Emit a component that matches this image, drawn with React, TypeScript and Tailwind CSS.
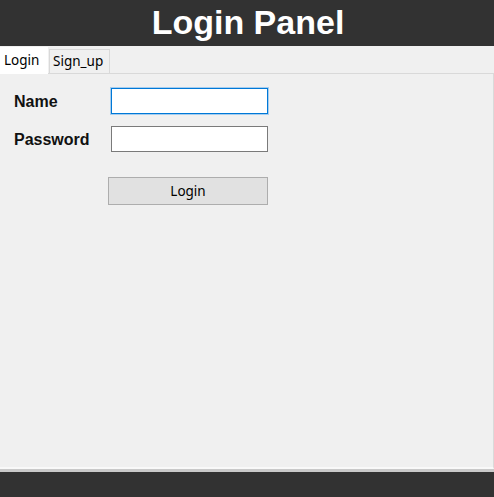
import { useState } from 'react';

export default function App() {
  const [tab, setTab] = useState<'login' | 'signup'>('login');
  const [name, setName] = useState('');
  const [password, setPassword] = useState('');

  return (
    <div className="w-full h-[497px] flex flex-col bg-[#f0f0f0]">
      <div className="h-[46px] bg-[#323232] flex items-center justify-center">
        <h1 className="text-white font-bold text-[34px] leading-none font-['Liberation_Sans',Arial,sans-serif] -mt-[3px] ml-[2px]">
          Login Panel
        </h1>
      </div>

      <div className="h-[28px] flex items-end border-b border-[#d9d9d9] font-['Noto_Sans',sans-serif] text-[13.5px] text-black">
        <button
          onClick={() => setTab('login')}
          className={
            tab === 'login'
              ? 'h-[27px] w-[48px] bg-white -mb-px relative z-10 pl-[4px] text-left leading-[25px]'
              : 'h-[24px] w-[48px] border border-b-0 border-[#d9d9d9] pl-[4px] text-left leading-[23px]'
          }
        >
          Login
        </button>
        <button
          onClick={() => setTab('signup')}
          className={
            tab === 'signup'
              ? 'h-[27px] w-[61px] ml-px bg-white -mb-px relative z-10 pl-[3px] text-left leading-[25px]'
              : 'h-[24px] w-[61px] ml-px border border-b-0 border-[#d9d9d9] pl-[3px] text-left leading-[23px]'
          }
        >
          Sign_up
        </button>
      </div>

      <div className="flex-1 border-r border-b-2 border-r-[#dadada] border-b-[#f9f9f9] pl-[14px] pt-[14px]">
        {tab === 'login' && (
          <div className="flex flex-col">
            <div className="flex items-center">
              <label className="w-[97px] pt-[2px] font-bold text-[16px] font-['Liberation_Sans',Arial,sans-serif] text-[#111]">
                Name
              </label>
              <input
                value={name}
                onChange={(e) => setName(e.target.value)}
                className="w-[157px] h-[26px] bg-white border border-[#0078d7] shadow-[0_0_0_1px_#a6cdee] outline-none px-1 text-[13px]"
              />
            </div>
            <div className="flex items-center mt-[12px]">
              <label className="w-[97px] pt-[2px] font-bold text-[16px] font-['Liberation_Sans',Arial,sans-serif] text-[#111]">
                Password
              </label>
              <input
                type="password"
                value={password}
                onChange={(e) => setPassword(e.target.value)}
                className="w-[157px] h-[26px] bg-white border border-[#7a7a7a] outline-none px-1 text-[13px]"
              />
            </div>
            <button className="mt-[25px] ml-[94px] w-[160px] h-[28px] bg-[#e1e1e1] border border-[#adadad] font-['Noto_Sans',sans-serif] text-[13.5px] text-black">
              Login
            </button>
          </div>
        )}
      </div>

      <div className="h-[3px] bg-[#c9c9c9]" />
      <div className="h-[25px] bg-[#323232]" />
    </div>
  );
}
